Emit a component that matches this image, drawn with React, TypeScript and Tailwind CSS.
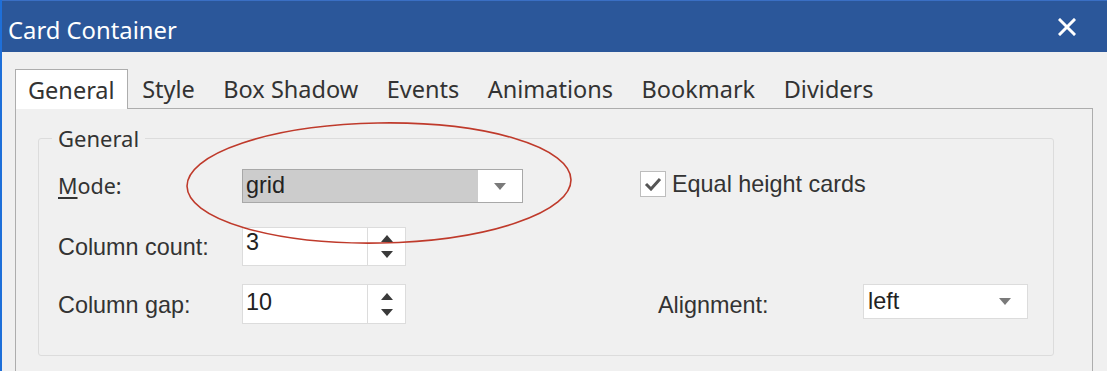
import React from "react";

const tabs = ["General", "Style", "Box Shadow", "Events", "Animations", "Bookmark", "Dividers"];

function Caret() {
    return (
        <svg width="12" height="7" viewBox="0 0 12 7" className="shrink-0">
            <path d="M0 0 H12 L6 7 Z" fill="#7a7a7a" />
        </svg>
    );
}

function Spinner({ value, top }: { value: string; top: string }) {
    return (
        <div className="flex w-[164px] h-full bg-white border border-[#dcdcdc]">
            <div className={"flex-1 pl-[3px] text-[23.4px] leading-[28px] text-[#222] " + top}>{value}</div>
            <div className="w-[38px] border-l border-[#dcdcdc] flex flex-col items-center justify-center gap-[9px]">
                <svg width="12" height="7" viewBox="0 0 12 7">
                    <path d="M0 7 H12 L6 0 Z" fill="#3a3a3a" />
                </svg>
                <svg width="12" height="7" viewBox="0 0 12 7">
                    <path d="M0 0 H12 L6 7 Z" fill="#3a3a3a" />
                </svg>
            </div>
        </div>
    );
}

export default function App() {
    return (
        <div className="relative w-[1107px] h-[371px] overflow-hidden bg-[#f0f0f0] border-l-2 border-[#1e6fd9]">
            {/* title bar */}
            <header className="h-[52px] bg-[#2b579a] border-t border-[#3a6fc4] flex items-center justify-between pl-[6px] pr-[31px]">
                <h1 className="text-white text-[23.8px] font-['Noto_Sans',sans-serif] leading-none mt-[8px]">Card Container</h1>
                <svg width="18" height="18" viewBox="0 0 18 18">
                    <path d="M2 2 L16 16 M16 2 L2 16" stroke="white" strokeWidth="3" strokeLinecap="square" />
                </svg>
            </header>

            <div className="pl-[13px] pt-[17px] font-['Noto_Sans',sans-serif]">
                {/* tabs */}
                <div className="flex h-[40px] relative z-10">
                    {tabs.map((t, i) => (
                        <div
                            key={t}
                            className={
                                i === 0
                                    ? "pl-[12px] pr-[12px] h-[40px] bg-white border border-b-0 border-[#adadad] text-[23.5px] leading-[40px] text-[#333]"
                                    : "pl-[14.5px] pr-[14px] h-[39px] text-[23.5px] leading-[40px] text-[#333]"
                            }
                        >
                            {t}
                        </div>
                    ))}
                </div>

                {/* tab pane */}
                <div className="-mt-[1px] w-[1078px] h-[300px] border border-[#adadad] pt-[15px] pl-[22px]">
                    <fieldset className="w-[1016px] border border-[#dcdcdc] rounded-[3px] pb-[31px]">
                        <legend className="ml-[13px] px-[6px] text-[22px] leading-[28px] text-[#333]">General</legend>

                        <div className="pt-[17px] pl-[19px] flex flex-col">
                            {/* row 1 */}
                            <div className="flex items-center h-[34px]">
                                <div className="w-[184px] text-[21.5px] text-[#333] pt-[1px]">
                                    <span className="underline underline-offset-[3px]">M</span>ode:
                                </div>
                                <div className="w-[281px] h-[34px] border border-[#a8a8a8] bg-white flex items-center">
                                    <div className="w-[235px] h-full bg-[#cccccc] pl-[3px] flex items-center text-[23.4px] text-[#222] font-['Liberation_Sans',sans-serif]">
                                        grid
                                    </div>
                                    <div className="flex-1 flex justify-center pt-[1px]">
                                        <Caret />
                                    </div>
                                </div>
                                <div className="ml-[117px] flex items-center gap-[6px] -mt-[3px]">
                                    <div className="w-[26px] h-[26px] border border-[#bdbdbd] bg-white flex items-center justify-center">
                                        <svg width="18" height="14" viewBox="0 0 18 14">
                                            <path d="M2 7 L7 12 L16 2" fill="none" stroke="#555" strokeWidth="3" />
                                        </svg>
                                    </div>
                                    <span className="text-[23.4px] text-[#333] font-['Liberation_Sans',sans-serif]">Equal height cards</span>
                                </div>
                            </div>

                            {/* row 2 */}
                            <div className="flex items-center h-[39px] mt-[24px] font-['Liberation_Sans',sans-serif]">
                                <div className="w-[184px] text-[23.4px] text-[#333] pt-[2px]">Column count:</div>
                                <Spinner value="3" top="pt-[0px]" />
                            </div>

                            {/* row 3 */}
                            <div className="flex items-center h-[40px] mt-[18px] font-['Liberation_Sans',sans-serif]">
                                <div className="w-[184px] text-[23.4px] text-[#333] pt-[4px]">Column gap:</div>
                                <Spinner value="10" top="pt-[3px]" />
                                <div className="ml-[252px] w-[205px] text-[23.4px] text-[#333] pt-[3px]">Alignment:</div>
                                <div className="w-[165px] h-[35px] self-start border border-[#dcdcdc] bg-white flex items-center justify-between pl-[4px] pr-[16px]">
                                    <span className="text-[23.4px] text-[#222]">left</span>
                                    <Caret />
                                </div>
                            </div>
                        </div>
                    </fieldset>
                </div>
            </div>

            {/* annotation ellipse */}
            <svg className="absolute left-0 top-0 pointer-events-none" width="1107" height="371">
                <ellipse cx="377" cy="183" rx="192" ry="60" fill="none" stroke="#bf3a2b" strokeWidth="1.6" transform="rotate(-1 377 183)" />
            </svg>
        </div>
    );
}
